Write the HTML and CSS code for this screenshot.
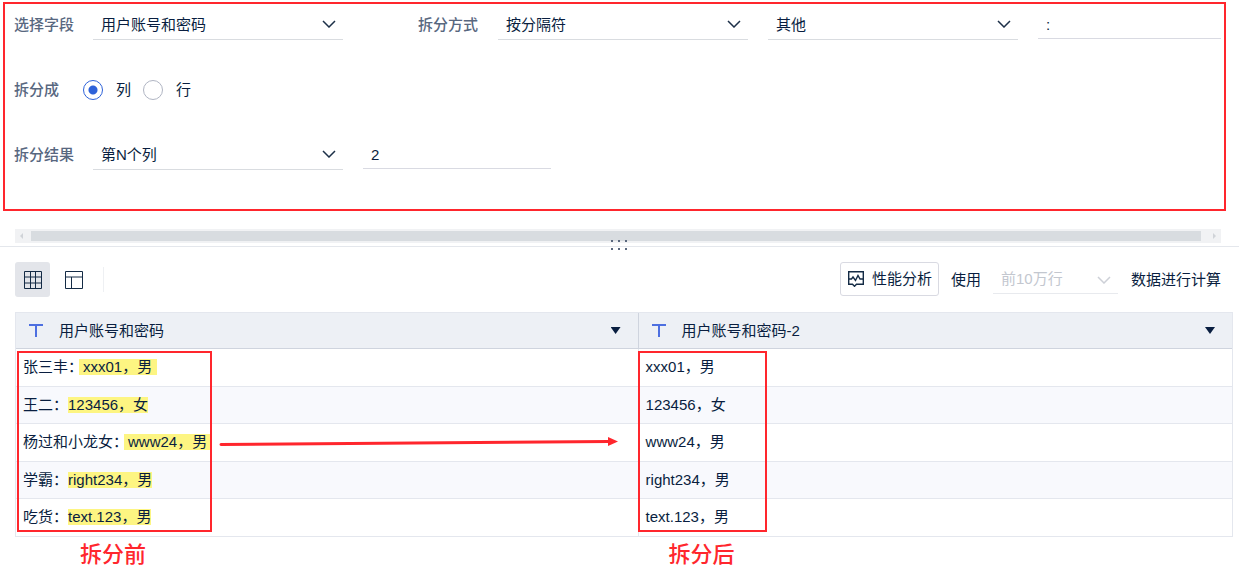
FILE: index.html
```html
<!DOCTYPE html>
<html lang="zh-CN">

<head>
    <meta charset="UTF-8">
    <meta name="viewport" content="width=device-width, initial-scale=1.0">
    <title>拆分列</title>
    <link rel="stylesheet" href="styles.css">
</head>

<body>
    <form class="split-form">
        <div class="form-row">
            <label class="form-label" for="field">选择字段</label>
            <div class="select-box">
                <select id="field">
                    <option>用户账号和密码</option>
                </select>
                <svg class="chevron" viewBox="0 0 14 8"><path d="M1 1l6 6 6-6" /></svg>
            </div>
            <label class="form-label second" for="method">拆分方式</label>
            <div class="select-box">
                <select id="method">
                    <option>按分隔符</option>
                </select>
                <svg class="chevron" viewBox="0 0 14 8"><path d="M1 1l6 6 6-6" /></svg>
            </div>
            <div class="select-box spaced">
                <select aria-label="分隔符类型">
                    <option>其他</option>
                </select>
                <svg class="chevron" viewBox="0 0 14 8"><path d="M1 1l6 6 6-6" /></svg>
            </div>
            <input class="text-input grow" type="text" value=":" aria-label="分隔符">
        </div>

        <fieldset class="form-row">
            <legend class="form-label">拆分成</legend>
            <label class="radio"><input type="radio" name="target" checked>列</label>
            <label class="radio"><input type="radio" name="target">行</label>
        </fieldset>

        <div class="form-row">
            <label class="form-label" for="result">拆分结果</label>
            <div class="select-box">
                <select id="result">
                    <option>第N个列</option>
                </select>
                <svg class="chevron" viewBox="0 0 14 8"><path d="M1 1l6 6 6-6" /></svg>
            </div>
            <input class="text-input" type="text" value="2" aria-label="N">
        </div>
    </form>

    <div class="scrollbar">
        <svg class="scroll-arrow" viewBox="0 0 16 10"><path d="M8 2v6L5 5z" /></svg>
        <div class="scroll-thumb"></div>
        <svg class="scroll-arrow wide" viewBox="0 0 20 10"><path d="M12 2v6l3-3z" /></svg>
    </div>
    <div class="divider">
        <svg class="grip" viewBox="0 0 16 10">
            <path d="M0 0h2v2H0zM7 0h2v2H7zM14 0h2v2h-2zM0 8h2v2H0zM7 8h2v2H7zM14 8h2v2h-2z" />
        </svg>
    </div>

    <div class="toolbar">
        <button class="icon-btn active" aria-label="表格">
            <svg viewBox="0 0 18 18"><path d="M.5 .5h17v17H.5zM6.5 .5v17M11.5 .5v17M.5 6h17M.5 12h17" /></svg>
        </button>
        <button class="icon-btn" aria-label="布局">
            <svg viewBox="0 0 18 18"><path d="M.5 .5h17v17H.5zM.5 6h17M6.5 6v11.500" /></svg>
        </button>
        <span class="separator"></span>
        <button class="analysis-btn">
            <svg viewBox="0 0 16 16"><path d="M.7 .7h14.600v12.600H8.500L6.500 15.300 4.500 13.300H.7zM1 8h2.500l1.500-2 2.500 3.500 2.500-5 2 3.500h3" /></svg>
            性能分析
        </button>
        <label class="limit-label" for="limit">使用</label>
        <div class="select-box small">
            <select id="limit" disabled>
                <option>前10万行</option>
            </select>
            <svg class="chevron" viewBox="0 0 14 8"><path d="M1 1l6 6 6-6" /></svg>
        </div>
        <span>数据进行计算</span>
    </div>

    <div class="preview">
        <table>
            <thead>
                <tr>
                    <th class="before-col">
                        <div class="head">
                            <svg class="type-icon" viewBox="0 0 14 13"><path d="M0 1h14M7 1v12" /></svg>
                            用户账号和密码
                            <button class="menu-btn" aria-label="菜单"></button>
                        </div>
                    </th>
                    <th>
                        <div class="head">
                            <svg class="type-icon" viewBox="0 0 14 13"><path d="M0 1h14M7 1v12" /></svg>
                            用户账号和密码-2
                            <button class="menu-btn" aria-label="菜单"></button>
                        </div>
                    </th>
                </tr>
            </thead>
            <tbody>
                <tr>
                    <td>张三丰：<mark class="loose">xxx01，男</mark></td>
                    <td>xxx01，男</td>
                </tr>
                <tr>
                    <td>王二：<mark>123456，女</mark></td>
                    <td>123456，女</td>
                </tr>
                <tr>
                    <td>杨过和小龙女：<mark class="loose">www24，男</mark></td>
                    <td>www24，男</td>
                </tr>
                <tr>
                    <td>学霸：<mark>right234，男</mark></td>
                    <td>right234，男</td>
                </tr>
                <tr>
                    <td>吃货：<mark>text.123，男</mark></td>
                    <td>text.123，男</td>
                </tr>
            </tbody>
        </table>

        <!-- annotations over the table -->
        <div class="note note-before"></div>
        <svg class="note-arrow" viewBox="0 0 400 12">
            <path class="line" d="M2 8.500L390 5.500" />
            <path d="M389 1l10 4.500-10 4.500z" />
        </svg>
        <div class="note note-after"></div>
    </div>

    <div class="captions">
        <div class="caption-before">拆分前</div>
        <div class="caption-after">拆分后</div>
    </div>
</body>

</html>
```
FILE: styles.css
```css
* {
    box-sizing: border-box;
}

body {
    margin: 0;
    font-family: "Liberation Sans", "Noto Sans CJK SC", sans-serif;
    font-size: 15px;
    line-height: 20px;
    color: #091e40;
    background-color: #fff;
}

button,
input,
select {
    font: inherit;
    color: inherit;
}

svg {
    display: block;
    flex: none;
}

/* split settings */
.split-form {
    display: flex;
    flex-direction: column;
    gap: 35px;
    margin: 2px 13px 0 3px;
    padding: 6px 3px 39px 9px;
    border: 2px solid #ff262d;
}

.form-row {
    display: flex;
    height: 30px;
    margin: 0;
    padding: 0;
    border: none;
}

.form-label {
    flex: none;
    width: 79px;
    padding: 0;
    line-height: 30px;
    font-weight: 500;
    color: #58677f;
}

.form-label.second {
    width: 80px;
    margin-left: 75px;
}

legend.form-label {
    float: left;
    width: 69px;
}

.select-box {
    position: relative;
    flex: none;
    width: 250px;
    height: 30px;
}

.select-box.spaced {
    margin-left: 20px;
}

.select-box select {
    width: 100%;
    height: 100%;
    padding: 0 30px 0 8px;
    border: none;
    border-bottom: 1px solid #d9dce0;
    border-radius: 0;
    background: none;
    appearance: none;
}

.chevron {
    position: absolute;
    right: 7px;
    top: 10px;
    width: 14px;
    height: 8px;
    fill: none;
    stroke: #1d3048;
    stroke-width: 1.5;
    pointer-events: none;
}

.text-input {
    width: 188px;
    min-width: 0;
    height: 29px;
    margin-left: 20px;
    padding: 0 8px;
    border: none;
    border-bottom: 1px solid #d9dae2;
    background: none;
}

.text-input.grow {
    flex: 1;
}

.radio {
    display: flex;
    align-items: center;
    gap: 13px;
    margin-right: 12px;
}

.radio input {
    width: 20px;
    height: 20px;
    margin: 0;
    border: 1px solid #b0b5c3;
    border-radius: 50%;
    appearance: none;
}

.radio input:checked {
    border-color: #2e62d9;
    background: radial-gradient(circle, #2e62d9 4px, transparent 5px);
}

/* scrollbar and splitter */
.scrollbar {
    display: flex;
    align-items: center;
    height: 14px;
    margin: 18px 18px 0 15px;
    background-color: #f1f2f4;
}

.scroll-arrow {
    width: 16px;
    height: 10px;
    fill: #d0d3d8;
}

.scroll-arrow.wide {
    width: 20px;
}

.scroll-thumb {
    flex: 1;
    height: 10px;
    background-color: #d8dce0;
}

.divider {
    position: relative;
    height: 1px;
    margin-top: 3px;
    background-color: #e4e7ec;
}

.grip {
    position: absolute;
    left: calc(50% - 9px);
    top: -6px;
    width: 16px;
    height: 10px;
    fill: #5a687e;
}

/* toolbar */
.toolbar {
    display: flex;
    align-items: center;
    height: 35px;
    margin: 15px 18px 15px 15px;
}

.icon-btn {
    display: flex;
    align-items: center;
    justify-content: center;
    width: 35px;
    height: 35px;
    margin-right: 6px;
    padding: 0;
    border: none;
    border-radius: 3px;
    background: none;
}

.icon-btn.active {
    background-color: #e3e5ea;
}

.icon-btn svg,
.analysis-btn svg {
    width: 18px;
    height: 18px;
    fill: none;
    stroke: #142b45;
}

.separator {
    width: 1px;
    height: 25px;
    margin-left: 6px;
    background-color: #eef0f3;
}

.analysis-btn {
    display: flex;
    align-items: center;
    align-self: flex-start;
    gap: 8px;
    height: 34px;
    margin-left: auto;
    padding: 0 6px 0 7px;
    border: 1px solid #d9dae2;
    border-radius: 3px;
    background-color: #fff;
}

.analysis-btn svg {
    width: 16px;
    height: 16px;
    stroke-width: 1.4;
}

.limit-label {
    margin: 0 12px;
}

.select-box.small {
    width: 125px;
    height: 28px;
    margin-right: 13px;
}

.select-box.small select {
    color: #c3c7cf;
    border-color: #e8eaee;
    opacity: 1;
}

.select-box.small .chevron {
    stroke: #cdd0d7;
}

/* preview table */
.preview {
    position: relative;
    margin: 0 6px 0 15px;
}

table {
    width: 100%;
    table-layout: fixed;
    border-collapse: separate;
    border-spacing: 0;
    border: 1px solid #e4e7ee;
    border-bottom: none;
}

th {
    height: 36px;
    padding: 0;
    font-weight: normal;
    background-color: #edf0f5;
    border-bottom: 1px solid #cfd4de;
}

.before-col {
    width: 51.2%;
    border-right: 1px solid #cfd4de;
}

.head {
    display: flex;
    align-items: center;
    padding: 0 17px 0 13px;
}

.type-icon {
    width: 14px;
    height: 13px;
    margin-right: 16px;
    fill: none;
    stroke: #4d6fe0;
    stroke-width: 2;
}

.menu-btn {
    width: 10px;
    height: 7px;
    margin-left: auto;
    padding: 0;
    border: none;
    background-color: #091e40;
    clip-path: polygon(0 0, 100% 0, 50% 100%);
}

td {
    height: 38px;
    padding: 0 7px 2px;
    border-bottom: 1px solid #e4e7ee;
}

tr:nth-child(even) td {
    height: 37px;
    padding-bottom: 0;
    background-color: #f8f9fd;
}

td:first-child {
    border-right: 1px solid #e4e7ee;
}

mark {
    display: inline-block;
    line-height: 16px;
    color: inherit;
    background-color: #fdf582;
}

mark.loose {
    margin-left: -4px;
    padding: 0 5px 0 4px;
}

/* annotations */
.note {
    position: absolute;
    top: 39px;
    height: 181px;
    border: 2px solid #ff262d;
    pointer-events: none;
}

.note-before {
    left: 2px;
    width: 195px;
}

.note-after {
    left: calc(51.2% - 1px);
    width: 129px;
}

.note-arrow {
    position: absolute;
    top: 124px;
    left: 204px;
    width: 400px;
    height: 12px;
    fill: #ff262d;
}

.note-arrow .line {
    stroke: #ff262d;
    stroke-width: 3;
    stroke-linecap: round;
}

.captions {
    display: grid;
    grid-template-columns: 51.2% 1fr;
    margin: 0 6px 0 15px;
    font-size: 22px;
    font-weight: 500;
    line-height: 36px;
    color: #ff262d;
}

.caption-before {
    padding-left: 65px;
}

.caption-after {
    padding-left: 30px;
}
```
